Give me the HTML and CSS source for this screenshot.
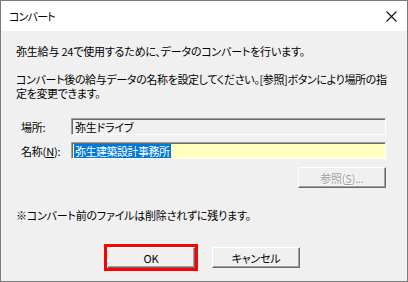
FILE: index.html
```html
<!DOCTYPE html>
<html lang="ja">
<head>
    <title>コンバート</title>
    <link rel="stylesheet" href="styles.css">
</head>
<body>
   <div class="dialog">
    <div class="titlebar">
        <span class="title">コンバート</span>
        <svg class="close" width="11" height="11" viewBox="0 0 11 11">
            <path d="M0.5 0.5 L10.5 10.5 M10.5 0.5 L0.5 10.5" stroke="#111" stroke-width="1.1" fill="none"/>
        </svg>
    </div>
    <div class="content">
        <p class="intro">弥生給与 24で使用するために、データのコンバートを行います。</p>
        <p class="desc">コンバート後の給与データの名称を設定してください。[参照]ボタンにより場所の指<br>定を変更できます。</p>
        <div class="form">
            <div class="row">
                <label>場所:</label>
                <div class="field readonly">弥生ドライブ</div>
            </div>
            <div class="row">
                <label>名称(<u>N</u>):</label>
                <div class="field edit"><span class="sel">弥生建築設計事務所</span></div>
            </div>
            <div class="browse-row">
                <button class="btn browse" disabled>参照(<u>S</u>)...</button>
            </div>
        </div>
        <p class="note">※コンバート前のファイルは削除されずに残ります。</p>
        <div class="actions">
            <button class="btn ok">OK</button>
            <button class="btn">キャンセル</button>
        </div>
    </div>
   </div>
</body>
</html>
```

FILE: styles.css
```css
*{
    box-sizing: border-box;
}
body{
    margin: 0;
    padding: 0;
    font-family: "Noto Sans CJK JP", "Liberation Sans", sans-serif;
    font-size: 11px;
    line-height: 14px;
    letter-spacing: -0.2px;
    font-feature-settings: "palt";
    color: #000;
}
.dialog{
    width: 408px;
    height: 282px;
    border: 1px solid #7a7a7a;
    background: #f0f0f0;
    display: flex;
    flex-direction: column;
    overflow: hidden;
}
/* Title bar */
.titlebar{
    height: 30px;
    flex: none;
    background: #fff;
    display: flex;
    align-items: center;
    justify-content: space-between;
    padding: 0 10px 0 8px;
}
.title{
    font-size: 11px;
    letter-spacing: -0.8px;
}
.close{
    display: block;
}
/* Body */
.content{
    padding: 0 15px;
}
p{
    margin: 0;
    white-space: nowrap;
}
.intro{
    margin-top: 13px;
}
.desc{
    margin-top: 14px;
    letter-spacing: -0.35px;
}
.form{
    margin-top: 18px;
    display: flex;
    flex-direction: column;
    gap: 7px;
}
.row{
    display: flex;
    align-items: center;
    height: 17px;
}
.row label{
    width: 55px;
    padding-left: 5px;
}
.field{
    width: 315px;
    height: 17px;
    border: 1px solid;
    border-color: #a0a0a0 #fff #fff #a0a0a0;
    box-shadow: inset 1px 1px #696969;
    padding: 1px 0 0 3px;
    white-space: nowrap;
}
.edit{
    background: #ffffc0;
    padding-left: 2px;
}
.sel{
    background: #0078d7;
    color: #fff;
    display: inline-block;
    padding: 0 1px;
    font-size: 11px;
    letter-spacing: -0.5px;
}
.browse-row{
    display: flex;
    justify-content: flex-end;
    padding-right: 6px;
    margin-top: 1px;
}
.btn{
    width: 88px;
    height: 21px;
    font: inherit;
    letter-spacing: inherit;
    background: #f0f0f0;
    border: 1px solid;
    border-color: #fff #696969 #696969 #fff;
    box-shadow: inset -1px -1px #a0a0a0;
    padding: 0;
    color: #000;
}
.browse{
    color: #a0a0a0;
    text-shadow: 1px 1px #fff;
}
.note{
    margin-top: 20px;
}
.actions{
    margin-top: 25px;
    display: flex;
    justify-content: center;
    gap: 17px;
    padding-right: 1px;
}
.ok{
    outline: 3px solid #f00;
    outline-offset: 0;
}
```
